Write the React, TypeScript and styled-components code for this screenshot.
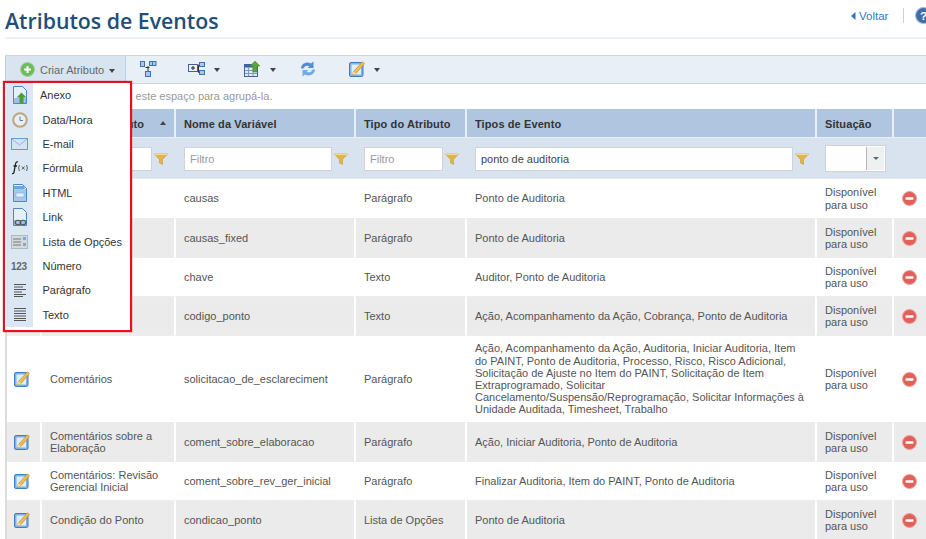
import React from "react";
import styled, { createGlobalStyle } from "styled-components";

const Global = createGlobalStyle`
  html, body { margin: 0; padding: 0; background: #fff; }
  body { font-family: "Liberation Sans", Arial, sans-serif; }
`;

const Page = styled.div`
  position: relative;
  width: 926px;
  height: 539px;
  overflow: hidden;
  background: #fff;
`;
const TitleBar = styled.header`
  display: flex;
  justify-content: space-between;
  align-items: flex-start;
  height: 37px;
  margin-left: 5px;
  border-bottom: 2px solid #eef2f7;
  margin-bottom: 16px;
`;
const Title = styled.h1`
  margin: 6px 0 0;
  font: 600 21.3px/30px "Open Sans", sans-serif;
  color: #1f4e79;
  white-space: nowrap;
`;
const TopActions = styled.div`
  display: flex;
  align-items: center;
  width: 75px;
  flex: none;
  margin-top: 8px;
  height: 15px;
  color: #2f78c4;
  font-size: 11.5px;
  svg { flex: none; }
`;
const Back = styled.a`
  display: flex;
  align-items: center;
  gap: 3px;
  margin-right: 15px;
`;
const Divider = styled.span`
  flex: none;
  width: 1px;
  height: 15px;
  background: #ccd2d9;
  margin-right: 11px;
`;
const Toolbar = styled.div`
  display: flex;
  align-items: center;
  margin-left: 5px;
  height: 27px;
  background: #e9eff7;
  border-top: 1px solid #cfd3d8;
  border-bottom: 1px solid #cfd3d8;
`;
const CreateButton = styled.div`
  display: flex;
  align-items: center;
  box-sizing: border-box;
  width: 121px;
  height: 27px;
  padding-left: 14px;
  background: #d8e5f1;
  border: 1px solid #bcd0e2;
  border-width: 0 1px;
  color: #666;
  font-size: 11px;
  gap: 5px;
`;
const Tool = styled.div<{ $ml: number }>`
  display: flex;
  align-items: center;
  gap: 9px;
  margin-left: ${(p) => p.$ml}px;
  margin-top: -2px;
`;
const Caret = styled.span`
  width: 0;
  height: 0;
  margin-top: 2px;
  border-left: 3.5px solid transparent;
  border-right: 3.5px solid transparent;
  border-top: 4px solid #444;
`;
const GroupHint = styled.div`
  margin-left: 5px;
  height: 25px;
  line-height: 24px;
  padding-left: 5px;
  color: #999;
  font-size: 11px;
  border-left: 2px solid #dcdcdc;
  white-space: nowrap;
`;
const Table = styled.table`
  margin-left: 5px;
  width: 932px;
  table-layout: fixed;
  border-collapse: separate;
  border-spacing: 0;
  border-left: 2px solid #dcdcdc;
  font-size: 11px;
  line-height: 12.2px;
  color: #555;
`;
const Head = styled.th`
  height: 29px;
  padding: 1px 0 0 8px;
  box-sizing: border-box;
  background: #b0c6e0;
  border-left: 2px solid #e9eff7;
  border-bottom: 1px solid #e9eff7;
  font: 700 11px "Liberation Sans", sans-serif;
  letter-spacing: 0.1px;
  color: #333;
  text-align: left;
  position: relative;
  white-space: nowrap;
  &:first-child { border-left: 0; }
`;
const SortMark = styled.span`
  position: absolute;
  right: 8px;
  top: 12px;
  border-left: 3.5px solid transparent;
  border-right: 3.5px solid transparent;
  border-bottom: 4px solid #444;
`;
const FilterCell = styled.td`
  height: 41px;
  padding: 1px 0 0 10px;
  box-sizing: border-box;
  background: #d8e3ef;
  border-bottom: 1px solid #e8e8e8;
`;
const FilterWrap = styled.div`
  display: flex;
  align-items: center;
  gap: 2px;
`;
const FilterInput = styled.div<{ $w: number }>`
  box-sizing: border-box;
  width: ${(p) => p.$w}px;
  height: 24px;
  line-height: 22px;
  padding-left: 5px;
  background: #fff;
  border: 1px solid #cfd3d8;
  color: #999;
  font-size: 11px;
`;
const FilterValue = styled(FilterInput)`
  color: #444;
`;
const SelectBox = styled.div`
  display: flex;
  justify-content: flex-end;
  box-sizing: border-box;
  width: 61px;
  height: 27px;
  background: #fff;
  border: 1px solid #cfd3d8;
  padding: 1px;
`;
const SelectArrow = styled.div`
  display: flex;
  align-items: center;
  justify-content: center;
  width: 17px;
  background: #eef1f2;
  border-left: 1px solid #b5b5b5;
`;
const SmallCaret = styled(Caret)`
  margin-top: 0;
  border-top-color: #666;
  border-left-width: 3px;
  border-right-width: 3px;
  border-top-width: 3px;
`;
const Row = styled.tr<{ $alt: boolean; $h: number }>`
  height: ${(p) => p.$h}px;
  background: ${(p) => (p.$alt ? "#ebebeb" : "#fff")};
`;
const Cell = styled.td`
  padding: 0 6px 0 8px;
  box-sizing: border-box;
  border-left: 2px solid #fff;
  border-bottom: 1px solid #ededed;
  vertical-align: middle;
`;
const IconCell = styled.td`
  padding: 0 3px 0 0;
  text-align: center;
  border-bottom: 1px solid #ededed;
  vertical-align: middle;
  svg { display: block; margin: 0 auto; }
`;
const ActionCell = styled(IconCell)`
  border-left: 2px solid #fff;
  padding: 0 12px 0 0;
`;
const StatusCell = styled(Cell)`
  padding-right: 0;
`;
const Menu = styled.div`
  position: absolute;
  left: 3px;
  top: 81px;
  box-sizing: border-box;
  width: 129px;
  height: 251px;
  padding: 0 1px 1px;
  background: #fff;
  border: 2px solid #e8101f;
  box-shadow: 0 0 1px #e8101f;
`;
const MenuItem = styled.div`
  display: flex;
  align-items: center;
  height: 24.4px;
  color: #333;
  font-size: 11px;
  white-space: nowrap;
`;
const MenuIcon = styled.div`
  display: flex;
  align-items: center;
  justify-content: center;
  align-self: stretch;
  flex: none;
  width: 27px;
  background: #dbe8f3;
`;
const MenuLabel = styled.span<{ $tight?: boolean }>`
  padding-left: ${(p) => (p.$tight ? 7 : 9.5)}px;
`;

/* ---------- icons ---------- */
const Help = () => (
  <svg width="17" height="17" viewBox="0 0 16 16">
    <circle cx="8" cy="8" r="7.5" fill="#3f6ea6" stroke="#a8bcd4" />
    <text x="8" y="12" textAnchor="middle" fontSize="11" fontWeight="700" fill="#fff" fontFamily="Liberation Sans">?</text>
  </svg>
);
const BackArrow = () => (
  <svg width="5" height="8" viewBox="0 0 5 8"><path d="M4.5 0v8L0 4z" fill="#2f78c4" /></svg>
);
const Plus = () => (
  <svg width="15" height="15" viewBox="0 0 15 15">
    <circle cx="7.5" cy="7.5" r="7" fill="#6dbb5a" stroke="#a6cf9a" />
    <path d="M7.5 4v7M4 7.5h7" stroke="#fff" strokeWidth="2" />
  </svg>
);
const Hierarchy = () => (
  <svg width="17" height="16" viewBox="0 0 17 16">
    <rect x=".5" y=".5" width="4" height="5" fill="#a9c7e8" stroke="#3b74b5" />
    <rect x="9.5" y=".5" width="3" height="4" fill="#a9c7e8" stroke="#3b74b5" />
    <rect x="12.5" y=".5" width="3.5" height="4" fill="#a9c7e8" stroke="#3b74b5" />
    <rect x="5.5" y="10.5" width="5" height="5" fill="#a9c7e8" stroke="#3b74b5" />
    <path d="M8 5v5M5.5 6.5h4" stroke="#333" />
  </svg>
);
const GroupTree = () => (
  <svg width="17" height="14" viewBox="0 0 17 14">
    <rect x=".5" y="2.5" width="9" height="7" fill="#e8f0fa" stroke="#41659a" />
    <path d="M5 4v4M3 6h4" stroke="#222" />
    <rect x="11.5" y=".5" width="5" height="4" fill="#a9c7e8" stroke="#3b74b5" />
    <rect x="11.5" y="8.5" width="5" height="4" fill="#a9c7e8" stroke="#3b74b5" />
    <path d="M9.500 6h1v-3h1M10.500 6v4.500h1" stroke="#333" fill="none" />
  </svg>
);
const ExportGrid = () => (
  <svg width="17" height="16" viewBox="0 0 17 16">
    <rect x=".5" y="3.5" width="13" height="12" fill="#dfe9f5" stroke="#41659a" />
    <rect x=".5" y="3.5" width="13" height="3" fill="#41659a" />
    <path d="M4.500 6v9M9 6v9M1 9.500h12M1 12.500h12" stroke="#7d9cc4" />
    <path d="M11 0l5 5h-3v6h-4V5H6z" fill="#5aa63c" stroke="#3f8a2a" strokeWidth=".5" />
  </svg>
);
const Refresh = () => (
  <svg width="16" height="16" viewBox="0 0 16 16">
    <path d="M1 7.500C1 2.500 7 0 11 2.500L13.500 .5v6.500H7.500l2-1.800C7 4 4.500 4.800 3.500 7.500z" fill="#4d90d6" />
    <path d="M15 8.500c0 5-6 7.500-10 5L2.500 15.500V9h6l-2 1.800C9 12 11.500 11.200 12.500 8.500z" fill="#6cacec" />
  </svg>
);
const EditIcon = () => (
  <svg width="16" height="16" viewBox="0 0 16 16">
    <rect x=".5" y="1.500" width="13.500" height="14" rx="1.500" fill="#7fb0e6" stroke="#3e7fc4" />
    <rect x="2.500" y="3.500" width="9.500" height="10" fill="#dfecf9" />
    <path d="M13.500 .8l2 1.700L7 12.500l-3.500 1.500 1-3.500z" fill="#f0bc4c" stroke="#b98b2e" strokeWidth=".6" />
    <path d="M3.500 14l1-3.500 2.500 2z" fill="#f5e0b0" />
  </svg>
);
const Funnel = () => (
  <svg width="14" height="12" viewBox="0 0 14 12">
    <path d="M.5 1h13L8.500 6.500V11.500L5.500 10V6.500z" fill="#e2b54a" stroke="#c99a33" strokeWidth=".6" />
    <path d="M1 1h12v1H1z" fill="#f3dc95" />
  </svg>
);
const Remove = () => (
  <svg width="15" height="15" viewBox="0 0 15 15">
    <circle cx="7.500" cy="7.500" r="7" fill="#e2605a" stroke="#eba09c" />
    <rect x="3.500" y="6.300" width="8" height="2.400" rx=".6" fill="#fff" />
  </svg>
);
const Doc = ({ children }: { children?: React.ReactNode }) => (
  <svg width="16" height="18" viewBox="0 0 16 18">
    <path d="M1.500 .5h9l4 4v13h-13z" fill="#e6f0fa" stroke="#4a86c8" />
    {children}
  </svg>
);
const menuIcons: Record<string, React.ReactNode> = {
  Anexo: (
    <Doc>
      <path d="M2 12h12v5H2z" fill="#9cc0e8" />
      <path d="M9.500 6.500l5 5h-3v5.500h-4v-5.500h-3z" fill="#4e9e35" />
    </Doc>
  ),
  "Data/Hora": (
    <svg width="16" height="16" viewBox="0 0 16 16">
      <circle cx="8" cy="8" r="6.800" fill="#e8eef6" stroke="#bda67c" strokeWidth="2" />
      <path d="M8 4.500v4h3" stroke="#5b7fa8" fill="none" />
    </svg>
  ),
  "E-mail": (
    <svg width="17" height="12" viewBox="0 0 17 12">
      <rect x=".5" y=".5" width="16" height="11" fill="#d3e3f5" stroke="#6c9bd2" />
      <path d="M1 1l7.500 6L16 1" fill="none" stroke="#8fb3dc" />
    </svg>
  ),
  "Fórmula": (
    <svg width="17" height="14" viewBox="0 0 17 14">
      <path d="M1 12.500c2 .5 2-1 2.500-4l1-5.500c.4-2 1.500-2.500 2.500-2M2.500 5h3.500" stroke="#222" strokeWidth="1.300" fill="none" />
      <path d="M8.500 4c-1 2-1 4 0 6M15.500 4c1 2 1 4 0 6M11 5.500l2.500 3M13.500 5.500l-2.500 3" stroke="#555" fill="none" />
    </svg>
  ),
  HTML: (
    <Doc>
      <path d="M1.500 2h11v3h-11z" fill="#6ea3dc" />
      <rect x="2" y="5" width="12" height="12" fill="#a9c9ec" />
      <rect x="4" y="9" width="8" height="4" fill="#e6effa" stroke="#6c9bd2" strokeWidth=".5" />
    </Doc>
  ),
  Link: (
    <Doc>
      <path d="M2 12h12v5H2z" fill="#9cc0e8" />
      <ellipse cx="6" cy="14.500" rx="2.800" ry="2.200" fill="none" stroke="#555" strokeWidth="1.100" />
      <ellipse cx="11" cy="14.500" rx="2.800" ry="2.200" fill="none" stroke="#555" strokeWidth="1.100" />
    </Doc>
  ),
  "Lista de Opções": (
    <svg width="17" height="14" viewBox="0 0 17 14">
      <rect x=".5" y=".5" width="16" height="13" fill="#d6d9dc" stroke="#b4b8bc" />
      <path d="M2 4h8M2 7h8M2 10h8" stroke="#777" />
      <rect x="12" y="2" width="3" height="3" fill="#7fa8d4" />
      <rect x="12" y="8" width="3" height="3" fill="#7fa8d4" />
    </svg>
  ),
  "Número": (
    <svg width="17" height="11" viewBox="0 0 17 11">
      <text x="0" y="10" fontFamily="Liberation Sans" fontWeight="700" fontSize="10" letterSpacing="-.3" fill="#666">123</text>
    </svg>
  ),
  "Parágrafo": (
    <svg width="12" height="13" viewBox="0 0 12 13">
      <path d="M0 .5h12M0 3h9M0 5.500h12M0 8h8M0 10.500h12M0 12.500h9" stroke="#555" />
    </svg>
  ),
  Texto: (
    <svg width="12" height="13" viewBox="0 0 12 13">
      <path d="M0 .5h12M0 3h12M0 5.500h12M0 8h12M0 10.500h12M0 12.500h12" stroke="#555" />
    </svg>
  ),
};

const menu = Object.keys(menuIcons);

type Rec = { name?: string; variable: string; type: string; events: string; h: number };
const rows: Rec[] = [
  { variable: "causas", type: "Parágrafo", events: "Ponto de Auditoria", h: 40 },
  { variable: "causas_fixed", type: "Parágrafo", events: "Ponto de Auditoria", h: 39 },
  { variable: "chave", type: "Texto", events: "Auditor, Ponto de Auditoria", h: 39 },
  { variable: "codigo_ponto", type: "Texto", events: "Ação, Acompanhamento da Ação, Cobrança, Ponto de Auditoria", h: 39 },
  {
    name: "Comentários",
    variable: "solicitacao_de_esclareciment",
    type: "Parágrafo",
    events:
      "Ação, Acompanhamento da Ação, Auditoria, Iniciar Auditoria, Item do PAINT, Ponto de Auditoria, Processo, Risco, Risco Adicional, Solicitação de Ajuste no Item do PAINT, Solicitação de Item Extraprogramado, Solicitar Cancelamento/Suspensão/Reprogramação, Solicitar Informações à Unidade Auditada, Timesheet, Trabalho",
    h: 87,
  },
  { name: "Comentários sobre a Elaboração", variable: "coment_sobre_elaboracao", type: "Parágrafo", events: "Ação, Iniciar Auditoria, Ponto de Auditoria", h: 39 },
  { name: "Comentários: Revisão Gerencial Inicial", variable: "coment_sobre_rev_ger_inicial", type: "Parágrafo", events: "Finalizar Auditoria, Item do PAINT, Ponto de Auditoria", h: 39 },
  { name: "Condição do Ponto", variable: "condicao_ponto", type: "Lista de Opções", events: "Ponto de Auditoria", h: 39 },
];

export default function App() {
  return (
    <Page>
      <Global />
      <TitleBar>
        <Title>Atributos de Eventos</Title>
        <TopActions>
          <Back><BackArrow />Voltar</Back>
          <Divider />
          <Help />
        </TopActions>
      </TitleBar>
      <Toolbar>
        <CreateButton><Plus />Criar Atributo<Caret /></CreateButton>
        <Tool $ml={14}><Hierarchy /></Tool>
        <Tool $ml={31}><GroupTree /><Caret /></Tool>
        <Tool $ml={24}><ExportGrid /><Caret /></Tool>
        <Tool $ml={24}><Refresh /></Tool>
        <Tool $ml={33}><EditIcon /><Caret /></Tool>
      </Toolbar>
      <GroupHint>Arraste uma coluna para este espaço para agrupá-la.</GroupHint>
      <Table>
        <colgroup>
          <col width="33" />
          <col width="134" />
          <col width="180" />
          <col width="111" />
          <col width="350" />
          <col width="77" />
          <col width="45" />
        </colgroup>
        <thead>
          <tr>
            <Head />
            <Head>Nome do Atributo<SortMark /></Head>
            <Head>Nome da Variável</Head>
            <Head>Tipo do Atributo</Head>
            <Head>Tipos de Evento</Head>
            <Head>Situação</Head>
            <Head />
          </tr>
          <tr>
            <FilterCell />
            <FilterCell><FilterWrap><FilterInput $w={102}>Filtro</FilterInput><Funnel /></FilterWrap></FilterCell>
            <FilterCell><FilterWrap><FilterInput $w={148}>Filtro</FilterInput><Funnel /></FilterWrap></FilterCell>
            <FilterCell><FilterWrap><FilterInput $w={79}>Filtro</FilterInput><Funnel /></FilterWrap></FilterCell>
            <FilterCell><FilterWrap><FilterValue $w={318}>ponto de auditoria</FilterValue><Funnel /></FilterWrap></FilterCell>
            <FilterCell><SelectBox><SelectArrow><SmallCaret /></SelectArrow></SelectBox></FilterCell>
            <FilterCell />
          </tr>
        </thead>
        <tbody>
          {rows.map((r, i) => (
            <Row key={r.variable} $alt={i % 2 === 1} $h={r.h}>
              <IconCell><EditIcon /></IconCell>
              <Cell>{r.name}</Cell>
              <Cell>{r.variable}</Cell>
              <Cell>{r.type}</Cell>
              <Cell>{r.events}</Cell>
              <StatusCell>Disponível para uso</StatusCell>
              <ActionCell><Remove /></ActionCell>
            </Row>
          ))}
        </tbody>
      </Table>
      <Menu>
        {menu.map((m, i) => (
          <MenuItem key={m}>
            <MenuIcon>{menuIcons[m]}</MenuIcon>
            <MenuLabel $tight={i === 0}>{m}</MenuLabel>
          </MenuItem>
        ))}
      </Menu>
    </Page>
  );
}
